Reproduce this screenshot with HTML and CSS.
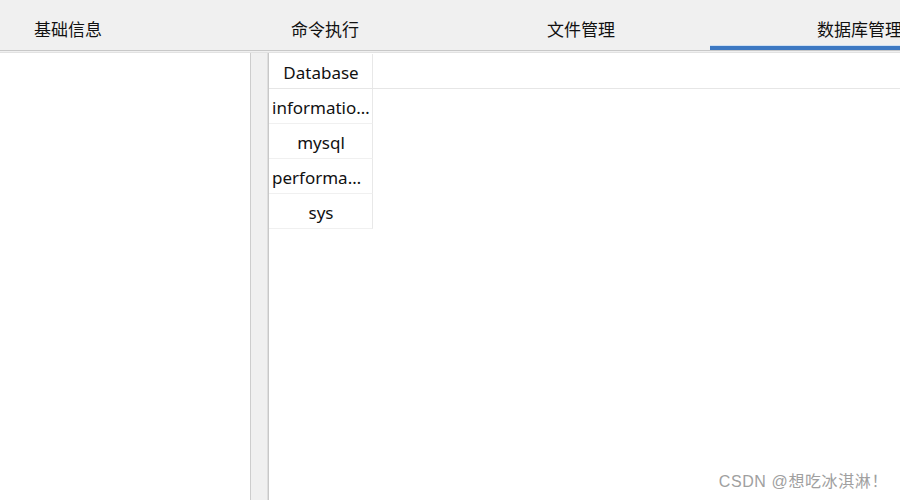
FILE: index.html
```html
<!DOCTYPE html>
<html lang="zh-CN">
<head>
<meta charset="utf-8">
<title>数据库管理</title>
<link rel="stylesheet" href="styles.css">
</head>
<body>
<div class="app">
  <div class="tabbar">
    <div class="tab tab-first">基础信息</div>
    <div class="tab">命令执行</div>
    <div class="tab">文件管理</div>
    <div class="tab tab-active">数据库管理</div>
  </div>
  <div class="tab-rule"></div>
  <div class="content">
    <div class="tree-panel"></div>
    <div class="splitter"></div>
    <div class="grid-panel">
      <div class="grid">
        <div class="grid-head">
          <div class="cell head-cell">Database</div>
          <div class="head-fill"></div>
        </div>
        <div class="row"><div class="cell">information_schema</div></div>
        <div class="row"><div class="cell">mysql</div></div>
        <div class="row"><div class="cell">performance_schema</div></div>
        <div class="row"><div class="cell">sys</div></div>
      </div>
    </div>
  </div>
  <div class="watermark">CSDN @想吃冰淇淋！</div>
</div>
</body>
</html>
```
FILE: styles.css
```css
html, body {
  margin: 0;
  padding: 0;
  width: 900px;
  height: 500px;
  overflow: hidden;
  background: #f0f0f0;
}

.app {
  position: relative;
  width: 900px;
  height: 500px;
  display: flex;
  flex-direction: column;
  font-family: "Noto Sans", "Noto Sans CJK SC", sans-serif;
  color: #111111;
}

.tabbar {
  display: flex;
  height: 50px;
  background: #f0f0f0;
  font-family: "Noto Sans CJK SC", "Noto Sans", sans-serif;
  font-size: 17px;
  flex: none;
}

.tab {
  box-sizing: border-box;
  width: 256px;
  padding-left: 95px;
  padding-top: 16px;
  white-space: nowrap;
  flex: none;
}

.tab-first {
  width: 196px;
  padding-left: 34px;
}

.tab-active {
  flex: 1;
  width: auto;
  margin-left: 2px;
  padding-left: 107px;
  border-bottom: 4px solid #3d78c2;
  box-shadow: 0 -1px 0 #cfe0f3 inset;
}

.tab-rule {
  flex: none;
  height: 1px;
  border-top: 1px solid #c8c8c8;
  border-bottom: 1px solid #e2e2e2;
  background: #f0f0f0;
}

.content {
  flex: 1;
  display: flex;
  min-height: 0;
}

.tree-panel {
  width: 250px;
  background: #ffffff;
  border-right: 1px solid #cdcdcd;
  flex: none;
}

.splitter {
  width: 16px;
  background: #f0f0f0;
  border-right: 1px solid #dedede;
  flex: none;
}

.grid-panel {
  flex: 1;
  background: #ffffff;
  border-left: 1px solid #c8c8c8;
  padding-top: 1px;
}

.grid {
  display: flex;
  flex-direction: column;
  font-size: 17px;
}

.grid-head {
  display: flex;
  height: 35px;
  border-bottom: 1px solid #e6e6e6;
  box-sizing: border-box;
}

.head-fill {
  flex: 1;
}

.row {
  display: flex;
  height: 35px;
}

.cell {
  box-sizing: border-box;
  width: 104px;
  height: 35px;
  line-height: 37px;
  padding: 0 2px 0 3px;
  text-align: center;
  white-space: nowrap;
  overflow: hidden;
  text-overflow: ellipsis;
  border-right: 1px solid #e8e8e8;
  border-bottom: 1px solid #f0f0f0;
}

.head-cell {
  border-bottom: none;
  height: 34px;
}

.watermark {
  position: absolute;
  right: 12px;
  bottom: 8px;
  font-family: "Liberation Sans", "Noto Sans CJK SC", sans-serif;
  font-size: 16px;
  color: #a0a0a0;
  letter-spacing: 0.6px;
}
```
